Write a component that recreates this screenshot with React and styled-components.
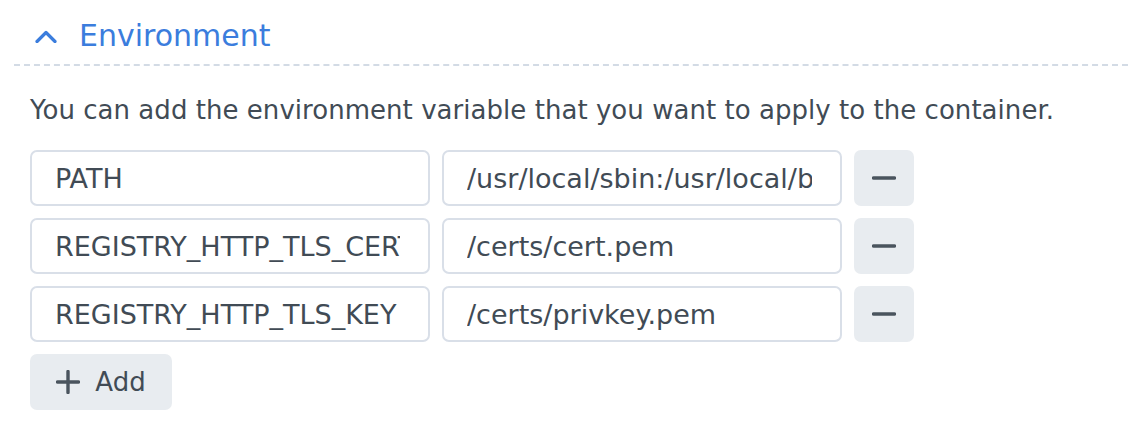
import React from "react";
import styled, { createGlobalStyle } from "styled-components";

const GlobalStyle = createGlobalStyle`
  body {
    margin: 0;
    background: #ffffff;
    font-family: "DejaVu Sans", Verdana, sans-serif;
  }
`;

const Section = styled.section`
  padding: 18px 0 0 14px;
  width: 1114px;
`;

const Header = styled.div`
  display: flex;
  align-items: center;
  gap: 22px;
  padding: 0 0 10px 21px;
  border-bottom: 2px dashed #d3dbe5;
  color: #3b7ddd;
  font-size: 30px;
  line-height: 36px;
  cursor: pointer;
`;

const Body = styled.div`
  padding: 29px 0 0 16px;
`;

const Description = styled.p`
  margin: 0 0 24px;
  color: #414b55;
  font-size: 26px;
  line-height: 31px;
  letter-spacing: 0.04px;
`;

const List = styled.div`
  display: flex;
  flex-direction: column;
  gap: 12px;
`;

const Row = styled.div`
  display: flex;
  gap: 12px;
`;

const Field = styled.input`
  box-sizing: border-box;
  width: 400px;
  height: 56px;
  padding: 0 28px 0 23px;
  border: 2px solid #d9dfe8;
  border-radius: 7px;
  background: #ffffff;
  color: #414b55;
  font-family: "DejaVu Sans", Verdana, sans-serif;
  font-size: 27px;
  outline: none;
`;

const IconButton = styled.button`
  display: flex;
  align-items: center;
  justify-content: center;
  gap: 15px;
  box-sizing: border-box;
  width: ${(p) => p.$width}px;
  height: 56px;
  padding: 0;
  border: none;
  border-radius: 7px;
  background: #e8ecf0;
  color: #414b55;
  font-family: "DejaVu Sans", Verdana, sans-serif;
  font-size: 26px;
  cursor: pointer;
`;

const Chevron = () => (
  <svg width="22" height="13" viewBox="0 0 22 13">
    <path d="M2 11.5 L11 2.5 L20 11.5" fill="none" stroke="#3b7ddd" strokeWidth="3.2" strokeLinecap="round" strokeLinejoin="round" />
  </svg>
);

const Minus = () => (
  <svg width="24" height="4" viewBox="0 0 24 4">
    <path d="M1.5 2 H22.5" stroke="#4a545e" strokeWidth="3.4" strokeLinecap="round" />
  </svg>
);

const Plus = () => (
  <svg width="24" height="24" viewBox="0 0 24 24">
    <path d="M12 1.5 V22.5 M1.5 12 H22.5" stroke="#4a545e" strokeWidth="3.4" strokeLinecap="round" />
  </svg>
);

const vars = [
  ["PATH", "/usr/local/sbin:/usr/local/bin:/usr/sbin:/usr/bin:/sbin:/bin"],
  ["REGISTRY_HTTP_TLS_CERTIFICATE", "/certs/cert.pem"],
  ["REGISTRY_HTTP_TLS_KEY", "/certs/privkey.pem"],
];

export default function App() {
  return (
    <>
      <GlobalStyle />
      <Section>
        <Header>
          <Chevron />
          <span>Environment</span>
        </Header>
        <Body>
          <Description>
            You can add the environment variable that you want to apply to the container.
          </Description>
          <List>
            {vars.map(([k, v]) => (
              <Row key={k}>
                <Field defaultValue={k} readOnly />
                <Field defaultValue={v} readOnly />
                <IconButton $width={60}>
                  <Minus />
                </IconButton>
              </Row>
            ))}
            <Row>
              <IconButton $width={142}>
                <Plus />
                <span>Add</span>
              </IconButton>
            </Row>
          </List>
        </Body>
      </Section>
    </>
  );
}
